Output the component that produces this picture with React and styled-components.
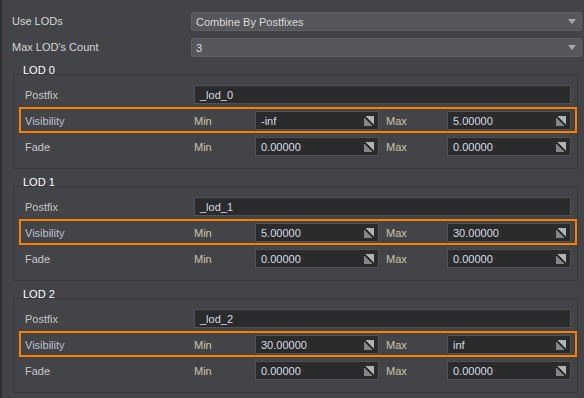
import React from "react";
import styled, { createGlobalStyle } from "styled-components";

const GlobalStyle = createGlobalStyle`
  html, body { margin: 0; padding: 0; background: #434448; }
  body { font-family: "Liberation Sans", Arial, sans-serif; font-size: 11px; }
  * { box-sizing: border-box; }
`;

const Panel = styled.div`
  width: 584px;
  height: 398px;
  overflow: hidden;
  padding: 12px 2px 0 12px;
  background: linear-gradient(to right, #2d2e30 0 2px, #434448 2px);
  display: flex;
  flex-direction: column;
`;

const TopRow = styled.div`
  display: grid;
  grid-template-columns: 179px 1fr;
  align-items: center;
  height: 19px;
  & + & { margin-top: 7px; }
`;

const TopLabel = styled.div`
  color: #d6d6d6;
  line-height: 19px;
`;

const Select = styled.div`
  height: 19px;
  display: flex;
  align-items: center;
  justify-content: space-between;
  padding: 0 5px 0 4px;
  background: #56575b;
  border: 1px solid #5f6064;
  border-radius: 2px;
  color: #dadada;
`;

const Arrow = styled.span`
  width: 0;
  height: 0;
  border-left: 4px solid transparent;
  border-right: 4px solid transparent;
  border-top: 5px solid #a8a8aa;
`;

const Group = styled.div`
  margin: 17px 4px 0 1px;
  border: 1px solid #38393c;
  padding: 6px 0 9px 0;
`;

const GroupTitle = styled.div`
  margin: -18px 0 4px 9px;
  height: 14px;
  line-height: 14px;
  color: #ffffff;
`;

const Row = styled.div`
  margin-left: 5px;
  height: 26px;
  padding: 2px 4px 1px 4px;
  border: 2px solid ${(p) => (p.$highlight ? "#ff8000" : "transparent")};
  display: grid;
  grid-template-columns: 169px 1fr;
  align-items: center;
`;

const RowLabel = styled.div`
  color: ${(p) => (p.$tone === "blue" ? "#bcc3cc" : "#c6c6c6")};
`;

const Range = styled.div`
  display: grid;
  grid-template-columns: 61px 124px 68px 124px;
  align-items: center;
`;

const SubLabel = styled.div`
  color: #cbc4a8;
  padding-left: ${(p) => (p.$indent ? "7px" : "0")};
`;

const Field = styled.div`
  height: 19px;
  display: flex;
  align-items: center;
  justify-content: space-between;
  padding: 0 4px 0 5px;
  background: #2a2b2d;
  border: 1px solid #505155;
  color: #d6dbe0;
`;

const SpinIcon = () => (
  <svg width="10" height="10" viewBox="0 0 10 10">
    <polygon points="0,0 10,0 10,10" fill="#b2b2b4" />
    <polygon points="0,0 0,10 10,10" fill="#858588" />
    <line x1="0" y1="0" x2="10" y2="10" stroke="#1e1f21" strokeWidth="1.8" />
  </svg>
);

const Spin = ({ value }) => (
  <Field>
    <span>{value}</span>
    <SpinIcon />
  </Field>
);

const lods = [
  { name: "LOD 0", postfix: "_lod_0", vis: ["-inf", "5.00000"], fade: ["0.00000", "0.00000"] },
  { name: "LOD 1", postfix: "_lod_1", vis: ["5.00000", "30.00000"], fade: ["0.00000", "0.00000"] },
  { name: "LOD 2", postfix: "_lod_2", vis: ["30.00000", "inf"], fade: ["0.00000", "0.00000"] },
];

const RangeRow = ({ label, values, highlight, tone }) => (
  <Row $highlight={highlight}>
    <RowLabel $tone={tone}>{label}</RowLabel>
    <Range>
      <SubLabel>Min</SubLabel>
      <Spin value={values[0]} />
      <SubLabel $indent>Max</SubLabel>
      <Spin value={values[1]} />
    </Range>
  </Row>
);

export default function App() {
  return (
    <>
      <GlobalStyle />
      <Panel>
        <TopRow>
          <TopLabel>Use LODs</TopLabel>
          <Select>
            <span>Combine By Postfixes</span>
            <Arrow />
          </Select>
        </TopRow>
        <TopRow>
          <TopLabel>Max LOD's Count</TopLabel>
          <Select>
            <span>3</span>
            <Arrow />
          </Select>
        </TopRow>
        {lods.map((l) => (
          <Group key={l.name}>
            <GroupTitle>{l.name}</GroupTitle>
            <Row>
              <RowLabel>Postfix</RowLabel>
              <Field>{l.postfix}</Field>
            </Row>
            <RangeRow label="Visibility" values={l.vis} highlight tone="blue" />
            <RangeRow label="Fade" values={l.fade} />
          </Group>
        ))}
      </Panel>
    </>
  );
}
